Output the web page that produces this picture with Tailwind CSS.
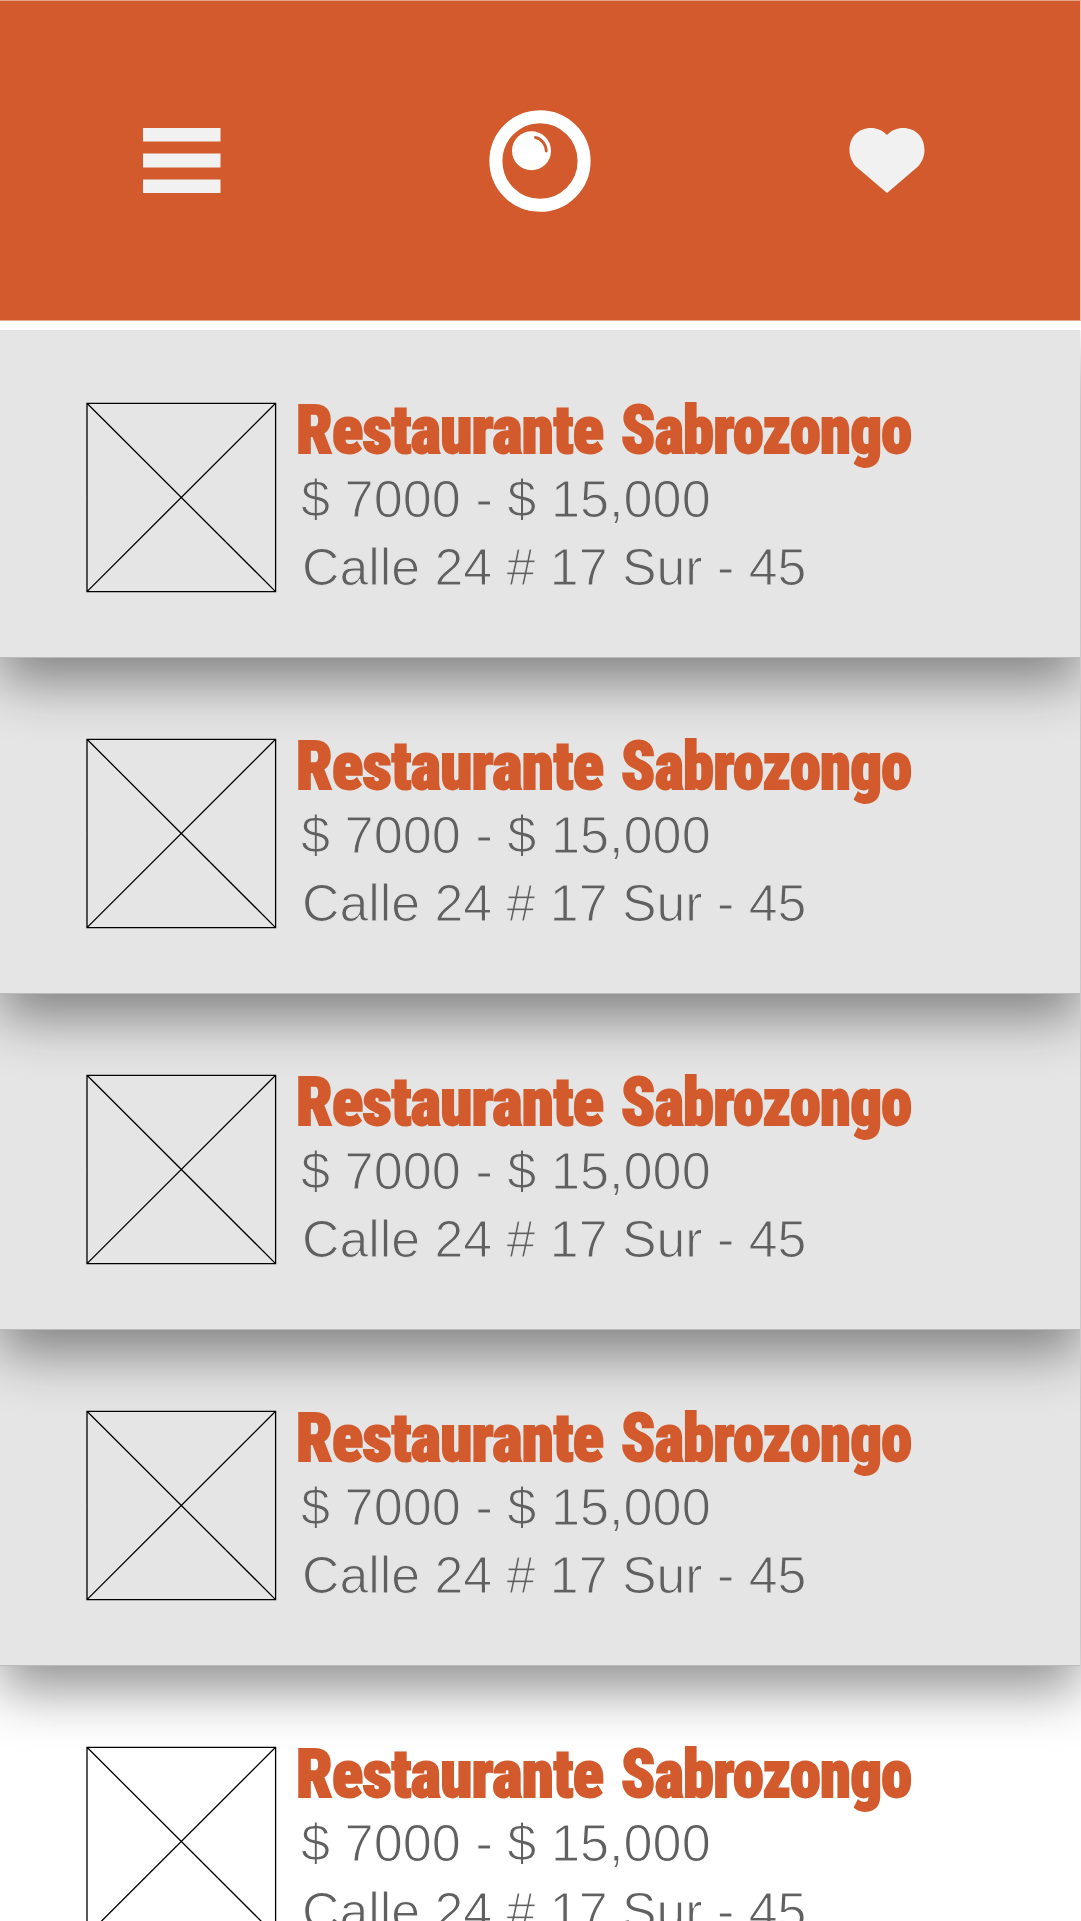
<!DOCTYPE html>
<html lang="es">
<head>
<meta charset="utf-8">
<title>Restaurantes</title>
<script src="https://cdn.jsdelivr.net/npm/@tailwindcss/browser@4"></script>
</head>
<body class="bg-white">
<div class="w-[1081px] h-[1921px] overflow-hidden bg-white">
  <header class="relative z-50 bg-white pb-[9px] w-[1081px] h-[330px]">
    <div class="h-[321px] w-[1081px] border-y border-r border-y-[#e5a68c] border-r-[#efbfa9] bg-[#d25a2c] flex items-center pl-[143px]">
      <svg class="w-[78px] h-[65px]" viewBox="0 0 78 65" fill="#f1f1f1"><path d="M0 0h77.5v13.5H0zM0 25.5h77.5v14H0zM0 51.5h77.5V65H0z"/></svg>
      <svg class="w-[102px] h-[102px] ml-[268px]" viewBox="0 0 102 102"><ellipse cx="51" cy="51" rx="44.1" ry="44.3" fill="none" stroke="#fff" stroke-width="13"/><circle cx="42.500" cy="40.700" r="19.500" fill="#fff"/><path d="M46.500 27.500C52 28.500 57 34 57.300 41" fill="none" stroke="#d25a2c" stroke-width="2.800" stroke-linecap="round"/></svg>
      <svg class="w-[76px] h-[65px] ml-[258px]" viewBox="0 0 76 65" fill="#f1f1f1"><path d="M38 7C33 2 28 0 22 0C9 0 .5 9.500 .5 22C.5 29 3.500 34.500 7 38.500L38 65L69 38.500C72.500 34.500 75.500 29 75.500 22C75.500 9.500 67 0 54 0C48 0 43 2 38 7Z"/></svg>
    </div>
  </header>
  <main id="list" class="w-[1080px] text-[#606060] font-['Liberation_Sans',sans-serif]"></main>
</div>
<template id="row">
  <section class="relative w-[1080px] flex pl-[86px]">
    <svg class="w-[191px] h-[191px] shrink-0" viewBox="0 0 191 191" fill="none" stroke="#000" stroke-width="1.3"><path d="M1 1.300H189.600V189.600H1ZM1 1.300L189.600 189.600M189.600 1.300L1 189.600"/></svg>
    <div class="ml-[19px]">
      <h2 class="flex h-[63px] leading-[57px] text-[67px] font-black font-['Roboto_Condensed',Roboto,sans-serif] text-[#d25a2c] [-webkit-text-stroke:1.8px_#d25a2c]"><span class="block w-[325px] origin-left tracking-[-0.7px] scale-x-[0.965]">Restaurante</span><span class="block origin-left tracking-[-0.7px] scale-x-[0.93]">Sabrozongo</span></h2>
      <p class="pl-[5px] h-[68px] leading-[68px] text-[52px] origin-left scale-x-[1.005]">$ 7000 - $ 15,000</p>
      <p class="pl-[6px] h-[68px] leading-[68px] text-[52px] origin-left scale-x-[0.997]">Calle 24 # 17 Sur - 45</p>
    </div>
  </section>
</template>
<script>
  const rows = [
    'h-[328px] pt-[72px] z-40 border-b border-[#bababa] bg-[#e5e5e5] shadow-[0_23px_52px_rgba(0,0,0,0.44)] [-webkit-text-stroke:1.1px_#e5e5e5]',
    'h-[336px] pt-[80px] z-30 border-b border-[#bababa] bg-[#e5e5e5] shadow-[0_23px_52px_rgba(0,0,0,0.44)] [-webkit-text-stroke:1.1px_#e5e5e5]',
    'h-[336px] pt-[80px] z-20 border-b border-[#bababa] bg-[#e5e5e5] shadow-[0_23px_52px_rgba(0,0,0,0.44)] [-webkit-text-stroke:1.1px_#e5e5e5]',
    'h-[336px] pt-[80px] z-10 border-b border-[#bababa] bg-[#e5e5e5] shadow-[0_23px_52px_rgba(0,0,0,0.44)] [-webkit-text-stroke:1.1px_#e5e5e5]',
    'h-[336px] pt-[80px] bg-white [-webkit-text-stroke:1.1px_#fff]'
  ];
  for (const cls of rows) {
    const node = document.getElementById('row').content.firstElementChild.cloneNode(true);
    node.className += ' ' + cls;
    document.getElementById('list').append(node);
  }
</script>
</body>
</html>
